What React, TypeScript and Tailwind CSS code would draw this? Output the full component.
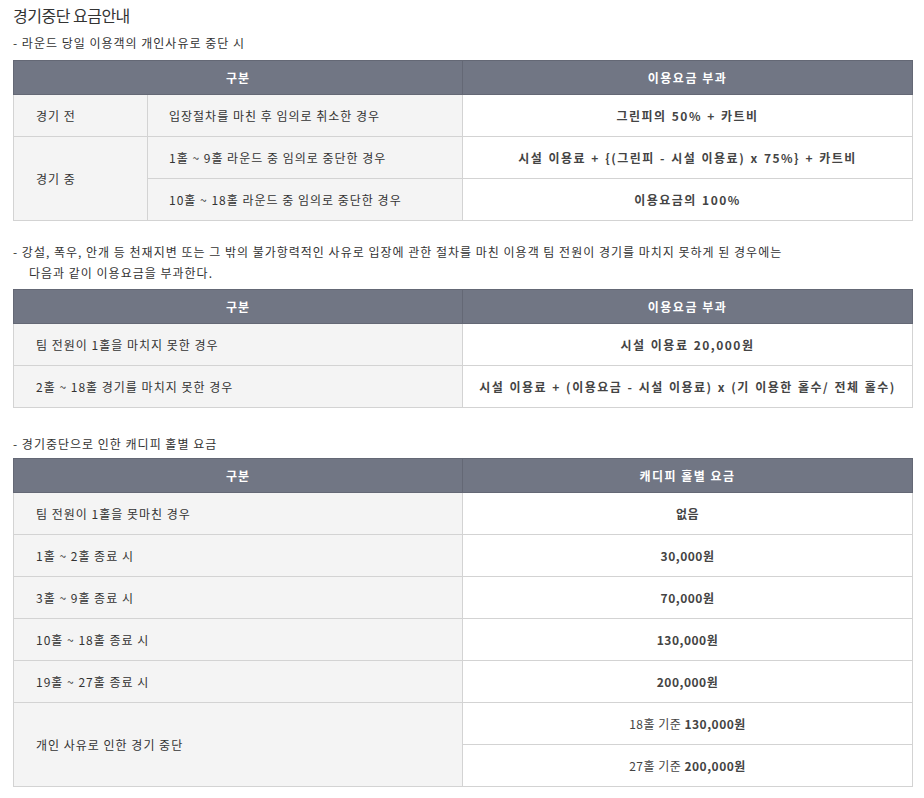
const font = {
  fontFamily: '"Noto Sans CJK KR", "Noto Sans", sans-serif',
};

type Row = { label: string; value: React.ReactNode };

const cellLeft = 'h-[42px] bg-[#f4f4f4] border border-[#d3d3d3] tracking-[1px]';
const cellRight = 'h-[42px] border border-[#d3d3d3] text-center font-bold text-[#444] tracking-[1.5px] [word-spacing:1px]';
// 금액 칸은 숫자가 많아서 자간을 좁게
const cellMoney = 'h-[42px] border border-[#d3d3d3] text-center font-bold text-[#444] tracking-[0.5px]';

function Head({ right }: { right: string }) {
  return (
    <thead>
      <tr className="bg-[#717684] text-white font-bold">
        <th colSpan={2} className="h-[34px] w-[449px] border border-[#646875] font-bold tracking-[1px]">
          구분
        </th>
        <th className="h-[34px] border border-[#646875] font-bold tracking-[1.5px]">{right}</th>
      </tr>
    </thead>
  );
}

function SimpleTable({ right, rows }: { right: string; rows: Row[] }) {
  return (
    <table className="w-[900px] border-collapse text-[12px] table-fixed">
      <Head right={right} />
      <tbody>
        {rows.map((r, i) => (
          <tr key={i}>
            <td colSpan={2} className={`${cellLeft} pl-[22px]`}>
              {r.label}
            </td>
            <td className={cellRight}>{r.value}</td>
          </tr>
        ))}
      </tbody>
    </table>
  );
}

export default function App() {
  return (
    <div className="bg-white w-[924px] min-h-[798px] px-[13px] text-[#333]" style={font}>
      <h2 className="text-[16px] leading-[30px] tracking-[-0.5px] text-[#333]">경기중단 요금안내</h2>
      <p className="text-[12px] leading-[20px] mt-[3px] mb-[7px] tracking-[1px]">- 라운드 당일 이용객의 개인사유로 중단 시</p>

      {/* 표 1 */}
      <table className="w-[900px] border-collapse text-[12px] table-fixed">
        <colgroup>
          <col className="w-[134px]" />
          <col className="w-[315px]" />
          <col />
        </colgroup>
        <Head right="이용요금 부과" />
        <tbody>
          <tr>
            <td className={`${cellLeft} pl-[22px]`}>경기 전</td>
            <td className={`${cellLeft} pl-[21px]`}>입장절차를 마친 후 임의로 취소한 경우</td>
            <td className={cellRight}>그린피의 50% + 카트비</td>
          </tr>
          <tr>
            <td rowSpan={2} className={`${cellLeft} pl-[22px]`}>경기 중</td>
            <td className={`${cellLeft} pl-[21px]`}>1홀 ~ 9홀 라운드 중 임의로 중단한 경우</td>
            <td className={cellRight}>
              시설 이용료 + {'{'}(그린피 - 시설 이용료) x 75%{'}'} + 카트비
            </td>
          </tr>
          <tr>
            <td className={`${cellLeft} pl-[21px]`}>10홀 ~ 18홀 라운드 중 임의로 중단한 경우</td>
            <td className={cellRight}>이용요금의 100%</td>
          </tr>
        </tbody>
      </table>

      <div className="text-[12px] leading-[21px] mt-[20px] mb-[6px] tracking-[1px]">
        <p>- 강설, 폭우, 안개 등 천재지변 또는 그 밖의 불가항력적인 사유로 입장에 관한 절차를 마친 이용객 팀 전원이 경기를 마치지 못하게 된 경우에는</p>
        <p className="pl-[16px]">다음과 같이 이용요금을 부과한다.</p>
      </div>

      {/* 표 2 */}
      <SimpleTable
        right="이용요금 부과"
        rows={[
          { label: '팀 전원이 1홀을 마치지 못한 경우', value: '시설 이용료 20,000원' },
          { label: '2홀 ~ 18홀 경기를 마치지 못한 경우', value: '시설 이용료 + (이용요금 - 시설 이용료) x (기 이용한 홀수/ 전체 홀수)' },
        ]}
      />

      <p className="text-[12px] leading-[20px] mt-[26px] mb-[4px] tracking-[1px]">- 경기중단으로 인한 캐디피 홀별 요금</p>

      {/* 표 3 */}
      <table className="w-[900px] border-collapse text-[12px] table-fixed">
        <Head right="캐디피 홀별 요금" />
        <tbody>
          {[
            ['팀 전원이 1홀을 못마친 경우', '없음'],
            ['1홀 ~ 2홀 종료 시', '30,000원'],
            ['3홀 ~ 9홀 종료 시', '70,000원'],
            ['10홀 ~ 18홀 종료 시', '130,000원'],
            ['19홀 ~ 27홀 종료 시', '200,000원'],
          ].map(([a, b]) => (
            <tr key={a}>
              <td colSpan={2} className={`${cellLeft} h-[41px] pl-[22px]`}>{a}</td>
              <td className={`${cellMoney} h-[41px]`}>{b}</td>
            </tr>
          ))}
          <tr>
            <td colSpan={2} rowSpan={2} className={`${cellLeft} pl-[22px]`}>개인 사유로 인한 경기 중단</td>
            <td className="h-[42px] border border-[#d3d3d3] text-center text-[#444] tracking-[0.5px]">
              18홀 기준 <b className="font-bold">130,000원</b>
            </td>
          </tr>
          <tr>
            <td className="h-[42px] border border-[#d3d3d3] text-center text-[#444] tracking-[0.5px]">
              27홀 기준 <b className="font-bold">200,000원</b>
            </td>
          </tr>
        </tbody>
      </table>
    </div>
  );
}
